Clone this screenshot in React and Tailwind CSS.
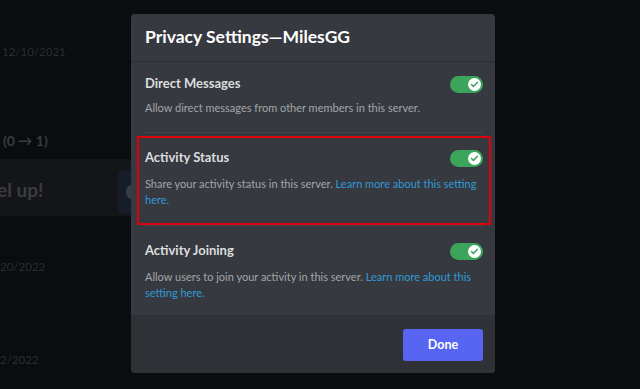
import { Check } from "lucide-react";

const font = { fontFamily: 'Lato, "Open Sans", sans-serif' };

const Toggle = () => (
  <div className="flex h-[17px] w-[33px] shrink-0 items-center justify-end rounded-full bg-[#3ba55c] pr-[2px]">
    <div className="flex h-[13px] w-[13px] items-center justify-center rounded-full bg-white">
      <Check className="h-[9px] w-[9px] text-[#3ba55c]" strokeWidth={4} />
    </div>
  </div>
);

const Link = ({ children }) => <span className="text-[#2f9bd6]">{children}</span>;

const RowTitle = ({ children }) => (
  <div className="flex h-[18px] items-center justify-between">
    <span className="text-[13px] font-bold text-[#dcddde]">{children}</span>
    <Toggle />
  </div>
);

export default function App() {
  return (
    <div className="relative h-[389px] w-[640px] overflow-hidden bg-[#0b0c0e]" style={font}>
      {/* dimmed page behind the modal */}
      <div className="flex flex-col">
        <div className="mt-[45px] pl-[2px] text-[11.5px] leading-[14px] text-[#2a2c30]">12/10/2021</div>
        <div className="mt-[74px] pl-[3px] text-[14px] font-bold leading-[16px] text-[#3a3c40]">(0 → 1)</div>
        <div className="mt-[10px] flex h-[57px] w-[140px] items-center justify-between bg-[#141518]">
          <span className="-ml-[3px] mt-[4px] text-[19px] font-bold leading-[24px] text-[#3b3d42]">el up!</span>
          <div className="mt-[8px] flex h-[44px] w-[22px] items-center justify-end rounded-l-[6px] bg-[#171c2b] pr-[4px]">
            <div className="h-[16px] w-[10px] rounded-l-full bg-[#3a3e49]" />
          </div>
        </div>
        <div className="mt-[44px] text-[11.5px] leading-[14px] text-[#2a2c30]">20/2022</div>
        <div className="mt-[79px] text-[11.5px] leading-[14px] text-[#2a2c30]">2/2022</div>
      </div>

      {/* modal */}
      <div className="absolute left-[131px] top-[14px] flex h-[359px] w-[364px] flex-col overflow-hidden rounded-[4px] bg-[#36393f]">
        <div className="flex h-[48px] items-center border-b border-[#2b2d31] px-[14px]">
          <h1 className="text-[17.5px] font-bold text-white">Privacy Settings—MilesGG</h1>
        </div>
        <div className="flex-1">
          <div className="mx-[14px] mr-[12px] border-b border-[#42454b] pt-[13px] pb-[16px]">
            <RowTitle>Direct Messages</RowTitle>
            <p className="mt-[7px] text-[11px] leading-[16px] text-[#a3a6aa]">
              Allow direct messages from other members in this server.
            </p>
          </div>
          <div className="relative mx-[14px] mr-[12px] border-b border-[#42454b] pt-[16px] pb-[17px]">
            <RowTitle>Activity Status</RowTitle>
            <p className="mt-[9px] pr-[2px] text-[11px] leading-[16px] text-[#a3a6aa]">
              Share your activity status in this server. <Link>Learn more about this setting here.</Link>
            </p>
            <div className="absolute -left-[8px] -right-[8px] top-[3px] bottom-0 border-2 border-[#e0000b]" />
          </div>
          <div className="mx-[14px] mr-[12px] pt-[16px]">
            <RowTitle>Activity Joining</RowTitle>
            <p className="mt-[9px] pr-[4px] text-[11px] leading-[16px] text-[#a3a6aa]">
              Allow users to join your activity in this server. <Link>Learn more about this setting here.</Link>
            </p>
          </div>
        </div>
        <div className="flex h-[58px] items-center justify-end bg-[#2f3136] pr-[12px] pt-[2px]">
          <button className="h-[32px] w-[80px] rounded-[3px] bg-[#5865f2] text-[12.5px] font-bold text-white">
            Done
          </button>
        </div>
      </div>
    </div>
  );
}
